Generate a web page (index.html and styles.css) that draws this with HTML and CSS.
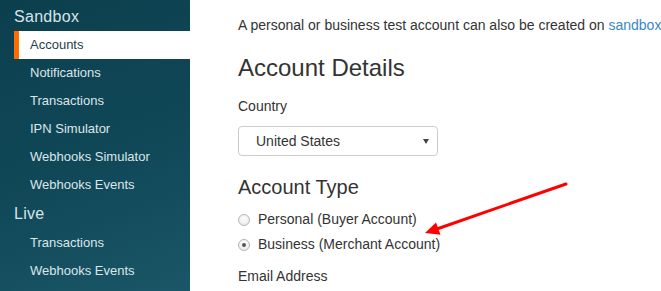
FILE: index.html
```html
<!DOCTYPE html>
<html>
<head>
<meta charset="utf-8">
<link rel="stylesheet" href="styles.css">
</head>
<body>
<div class="page">
  <nav class="sidebar">
    <div class="nav-heading">Sandbox</div>
    <a class="nav-item active">Accounts</a>
    <a class="nav-item">Notifications</a>
    <a class="nav-item">Transactions</a>
    <a class="nav-item">IPN Simulator</a>
    <a class="nav-item">Webhooks Simulator</a>
    <a class="nav-item">Webhooks Events</a>
    <div class="nav-heading live">Live</div>
    <a class="nav-item">Transactions</a>
    <a class="nav-item">Webhooks Events</a>
  </nav>
  <main class="content">
    <p class="intro">A personal or business test account can also be created on <a class="link">sandbox</a></p>
    <h1 class="title">Account Details</h1>
    <div class="label">Country</div>
    <div class="select"><span>United States</span><span class="caret"></span></div>
    <h2 class="subtitle">Account Type</h2>
    <div class="radio-row"><span class="radio"></span><span>Personal (Buyer Account)</span></div>
    <div class="radio-row"><span class="radio checked"></span><span>Business (Merchant Account)</span></div>
    <div class="label email">Email Address</div>
  </main>
  <svg class="annotation" width="661" height="291" viewBox="0 0 661 291">
    <line x1="566" y1="184" x2="434" y2="230" stroke="#ff0000" stroke-width="3" stroke-linecap="round"/>
    <polygon points="425,233 436,222.5 440.5,234.8" fill="#ff0000"/>
  </svg>
</div>
</body>
</html>
```
FILE: styles.css
```css
html, body {
  margin: 0;
  padding: 0;
  background: #ffffff;
}
body {
  font-family: "Liberation Sans", Arial, sans-serif;
  color: #333333;
}
.page {
  position: relative;
  display: flex;
  width: 661px;
  height: 291px;
  overflow: hidden;
}
.sidebar {
  width: 190px;
  flex: none;
  height: 291px;
  background: linear-gradient(160deg, #0c3f4e 0%, #104858 55%, #1a5667 100%);
  display: flex;
  flex-direction: column;
}
.nav-heading {
  height: 31px;
  line-height: 33px;
  padding-left: 14px;
  font-size: 16px;
  letter-spacing: 0.3px;
  color: #d6e4e9;
}
.nav-heading.live {
  height: 30px;
  line-height: 30px;
}
.nav-item {
  display: block;
  height: 28px;
  line-height: 28px;
  padding-left: 30px;
  font-size: 13px;
  color: #dbe6ea;
}
.nav-item.active {
  margin-left: 14px;
  padding-left: 11px;
  border-left: 5px solid #ff6c00;
  background: #ffffff;
  color: #1d3f4a;
}
.content {
  padding: 15px 0 0 48px;
  font-size: 14px;
  white-space: nowrap;
}
.intro {
  margin: 0;
  line-height: 20px;
}
.link {
  color: #3a87c8;
}
.title {
  margin: 20px 0 0;
  font-size: 24px;
  font-weight: normal;
  line-height: 26px;
  color: #333;
}
.label {
  margin-top: 15px;
  line-height: 20px;
}
.label.email {
  margin-top: 12px;
}
.select {
  margin-top: 10px;
  height: 28px;
  border: 1px solid #cccccc;
  border-radius: 4px;
  display: flex;
  align-items: center;
  justify-content: space-between;
  padding: 0 8px 0 17px;
  box-sizing: content-box;
  width: 173px;
}
.caret {
  width: 0;
  height: 0;
  border-left: 3px solid transparent;
  border-right: 3px solid transparent;
  border-top: 5px solid #444;
  margin-top: 1px;
}
.subtitle {
  margin: 20px 0 0;
  font-size: 20px;
  font-weight: normal;
  line-height: 22px;
  color: #333;
}
.radio-row {
  display: flex;
  align-items: center;
  height: 20px;
  gap: 8px;
  margin-top: 11px;
}
.radio-row + .radio-row {
  margin-top: 5px;
}
.radio {
  width: 10px;
  height: 10px;
  border: 1px solid #b5b5b5;
  border-radius: 50%;
  background: radial-gradient(circle at 50% 35%, #fdfdfd 0%, #e6e6e6 100%);
  display: flex;
  align-items: center;
  justify-content: center;
  margin-top: 1px;
}
.radio.checked::after {
  content: "";
  width: 4px;
  height: 4px;
  border-radius: 50%;
  background: #555;
}
.annotation {
  position: absolute;
  left: 0;
  top: 0;
  pointer-events: none;
}
```
